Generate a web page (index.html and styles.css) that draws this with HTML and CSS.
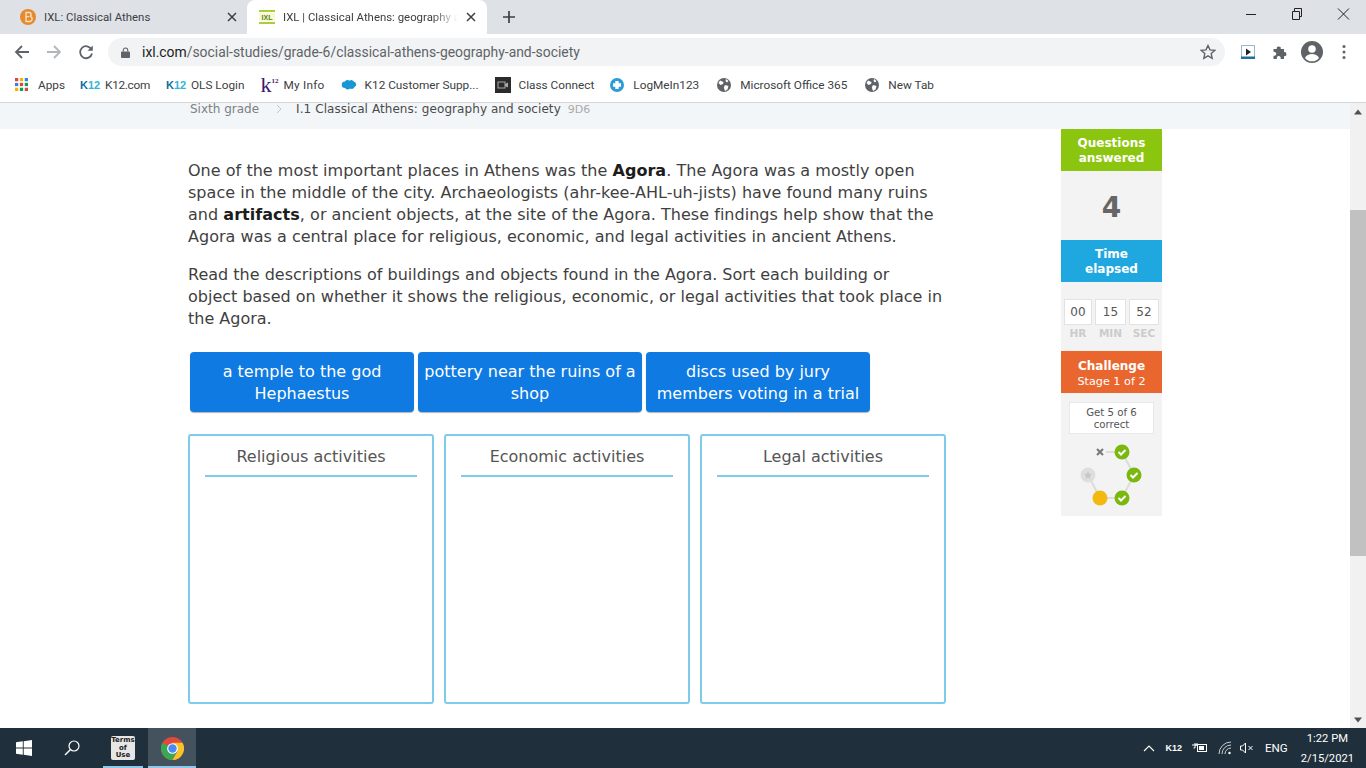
FILE: index.html
```html
<!DOCTYPE html>
<html lang="en">
<head>
<meta charset="utf-8">
<title>IXL | Classical Athens: geography and society</title>
<link rel="stylesheet" href="styles.css">
</head>
<body>
<div class="tabbar">
  <div class="tab">
    <svg class="favicon" viewBox="0 0 16 16"><circle cx="8" cy="8" r="8" fill="#e58a2e"/><path d="M6 3.5h3a2 2 0 0 1 .8 3.900A2.300 2.300 0 0 1 9.300 12.500H6z" fill="none" stroke="#fbe3c6" stroke-width="1.300"/><path d="M6 7.700h3" stroke="#fbe3c6" stroke-width="1.100"/></svg>
    <span class="tab-title">IXL: Classical Athens</span>
    <svg class="tab-close" viewBox="0 0 10 10"><path d="M1 1l8 8M9 1l-8 8" stroke="#3c4043" stroke-width="1.500"/></svg>
  </div>
  <div class="tab tab-active">
    <svg class="favicon" viewBox="0 0 16 16"><rect y="1" width="16" height="2" fill="#a8cf3a"/><rect y="13" width="16" height="2" fill="#a8cf3a"/><rect y="4" width="16" height="8" fill="#fff6cf"/><text x="8" y="11" text-anchor="middle" class="fav-text">IXL</text></svg>
    <span class="tab-title tab-fade">IXL | Classical Athens: geography and society</span>
    <svg class="tab-close" viewBox="0 0 10 10"><path d="M1 1l8 8M9 1l-8 8" stroke="#3c4043" stroke-width="1.500"/></svg>
  </div>
  <svg class="new-tab" viewBox="0 0 12 12"><path d="M6 0v12M0 6h12" stroke="#3c4043" stroke-width="1.700"/></svg>
  <div class="win-controls">
    <svg class="win-btn" viewBox="0 0 46 34"><path d="M18 14.500h10" stroke="#222" stroke-width="1"/></svg>
    <svg class="win-btn" viewBox="0 0 46 34"><path d="M18.500 11.500h7v8h-7zM20.500 11.500v-3h7v8h-2" fill="none" stroke="#222"/></svg>
    <svg class="win-btn" viewBox="0 0 46 34"><path d="M18 8.500l11 11M29 8.500l-11 11" stroke="#222" stroke-width="1"/></svg>
  </div>
</div>

<div class="toolbar">
  <svg class="nav-icon" viewBox="0 0 16 16"><path d="M15 8H2M8 2L2 8l6 6" fill="none" stroke="#5f6368" stroke-width="1.800"/></svg>
  <svg class="nav-icon" viewBox="0 0 16 16"><path d="M1 8h13M8 2l6 6-6 6" fill="none" stroke="#b4b7ba" stroke-width="1.800"/></svg>
  <svg class="nav-icon" viewBox="0 0 16 16"><path d="M13.500 5.500A6 6 0 1 0 14 9.500" fill="none" stroke="#5f6368" stroke-width="1.800"/><path d="M14.800 1.500v5.200H9.600z" fill="#5f6368"/></svg>
  <div class="omnibox">
    <svg class="lock" viewBox="0 0 10 12"><path d="M2.500 5V3.500a2.500 2.500 0 0 1 5 0V5" fill="none" stroke="#5f6368" stroke-width="1.200"/><rect y="5" width="10" height="7" rx="1" fill="#5f6368"/></svg>
    <span class="url"><span class="url-host">ixl.com</span>/social-studies/grade-6/classical-athens-geography-and-society</span>
    <svg class="star" viewBox="0 0 16 16"><path d="M8 1.500l2 4.400 4.700.5-3.500 3.200 1 4.700L8 11.900l-4.200 2.400 1-4.700L1.300 6.400 6 5.900z" fill="none" stroke="#5f6368" stroke-width="1.400"/></svg>
  </div>
  <div class="ext-icons">
    <svg class="ext-icon" viewBox="0 0 16 16"><rect x="1.500" y="1.500" width="13" height="13" fill="#fff" stroke="#9db7cc"/><rect x="1" y="12.500" width="14" height="2.500" fill="#1f6f9f"/><path d="M6 4.500l5 3.500-5 3.500z" fill="#222"/></svg>
    <svg class="ext-icon" viewBox="0 0 16 16"><path d="M1.500 5h3.300a2 2 0 1 1 3.900 0H12v3.200a2 2 0 1 1 0 3.900V15H8.500a2 2 0 1 0-3.500 0H1.500v-3.300a2 2 0 1 0 0-3.700z" fill="#5f6368"/></svg>
    <svg class="avatar" viewBox="0 0 22 22"><circle cx="11" cy="11" r="11" fill="#5f6368"/><circle cx="11" cy="8" r="3.800" fill="#fff"/><path d="M4 17c1.500-3 4-4 7-4s5.500 1 7 4a9 9 0 0 1-14 0z" fill="#fff"/></svg>
    <svg class="menu-dots" viewBox="0 0 4 16"><circle cx="2" cy="2.500" r="1.500" fill="#5f6368"/><circle cx="2" cy="8" r="1.500" fill="#5f6368"/><circle cx="2" cy="13.500" r="1.500" fill="#5f6368"/></svg>
  </div>
</div>

<div class="bookmarks">
  <span class="bm bm-apps">
    <svg class="bm-icon" viewBox="0 0 12 12"><rect width="3" height="3" fill="#d9483b"/><rect x="4.500" width="3" height="3" fill="#f4b400"/><rect x="9" width="3" height="3" fill="#3f7fe0"/><rect y="4.500" width="3" height="3" fill="#3f7fe0"/><rect x="4.500" y="4.500" width="3" height="3" fill="#d9483b"/><rect x="9" y="4.500" width="3" height="3" fill="#0f9d58"/><rect y="9" width="3" height="3" fill="#f4b400"/><rect x="4.500" y="9" width="3" height="3" fill="#0f9d58"/><rect x="9" y="9" width="3" height="3" fill="#d9483b"/></svg>
    Apps</span>
  <span class="bm bm-tight"><span class="k12-mark">K<i>12</i></span>K12.com</span>
  <span class="bm"><span class="k12-mark">K<i>12</i></span>OLS Login</span>
  <span class="bm bm-loose"><span class="k2-mark">k<sup>12</sup></span>My Info</span>
  <span class="bm">
    <svg class="bm-icon-wide" viewBox="0 0 16 12"><path d="M4 2.500a3 3 0 0 1 4.500-.8 3 3 0 0 1 4.500 1 2.800 2.800 0 0 1 .5 5.300 3 3 0 0 1-4.300 1.500 3.200 3.200 0 0 1-5.200-.5A3 3 0 0 1 4 2.500z" fill="#1798d5"/></svg>
    K12 Customer Supp...</span>
  <span class="bm">
    <svg class="bm-icon-cc" viewBox="0 0 16 16"><rect width="16" height="16" fill="#2b2b2b"/><rect x="3" y="5" width="7" height="6" fill="none" stroke="#aaa"/><path d="M10 7l3-1.500v5L10 9z" fill="#aaa"/></svg>
    Class Connect</span>
  <span class="bm">
    <svg class="bm-icon-lg" viewBox="0 0 14 14"><circle cx="7" cy="7" r="7" fill="#2c9bd6"/><path d="M5.300 3h3.400v2.300H11v3.400H8.700V11H5.300V8.700H3V5.300h2.300z" fill="#fff"/></svg>
    LogMeIn123</span>
  <span class="bm bm-globe">
    <svg class="bm-icon-lg" viewBox="0 0 14 14"><circle cx="7" cy="7" r="7" fill="#5f6368"/><path d="M3 2.500l3.500 1.500L6 6 3.500 7 1.500 5zM8 7l3.500 1-1 3.500L8 13 6.800 9.500zM9 1l2.500 2L10 4.500 8.500 3z" fill="#fff"/></svg>
    Microsoft Office 365</span>
  <span class="bm bm-globe">
    <svg class="bm-icon-lg" viewBox="0 0 14 14"><circle cx="7" cy="7" r="7" fill="#5f6368"/><path d="M3 2.500l3.500 1.500L6 6 3.500 7 1.500 5zM8 7l3.500 1-1 3.500L8 13 6.800 9.500zM9 1l2.500 2L10 4.500 8.500 3z" fill="#fff"/></svg>
    New Tab</span>
</div>

<div class="viewport">
  <main class="page">
    <nav class="crumbs">
      <span class="crumb-grade">Sixth grade</span>
      <svg class="crumb-sep" viewBox="0 0 6 10"><path d="M1 1l4 4-4 4" fill="none" stroke="#c4c8cb"/></svg>
      <span class="crumb-skill">I.1 Classical Athens: geography and society</span>
      <span class="crumb-code">9D6</span>
    </nav>
    <div class="columns">
      <section class="practice">
        <p class="para">One of the most important places in Athens was the <b>Agora</b>. The Agora was a mostly open space in the middle of the city. Archaeologists (ahr-kee-AHL-uh-jists) have found many ruins and <b>artifacts</b>, or ancient objects, at the site of the Agora. These findings help show that the Agora was a central place for religious, economic, and legal activities in ancient Athens.</p>
        <p class="para para-tight">Read the descriptions of buildings and objects found in the Agora. Sort each building or<br>object based on whether it shows the religious, economic, or legal activities that took place in<br>the Agora.</p>
        <div class="tiles">
          <div class="tile">a temple to the god Hephaestus</div>
          <div class="tile">pottery near the ruins of a shop</div>
          <div class="tile">discs used by jury members voting in a trial</div>
        </div>
        <div class="bins">
          <div class="bin"><h3 class="bin-title">Religious activities</h3></div>
          <div class="bin"><h3 class="bin-title">Economic activities</h3></div>
          <div class="bin"><h3 class="bin-title">Legal activities</h3></div>
        </div>
      </section>
      <aside class="stats">
        <div class="stat-head green">Questions answered</div>
        <div class="stat-num">4</div>
        <div class="stat-head blue">Time elapsed</div>
        <div class="timer">
          <div class="timer-col"><span class="timer-box tb-hr">00</span><span class="timer-label">HR</span></div>
          <div class="timer-col"><span class="timer-box tb-min">15</span><span class="timer-label">MIN</span></div>
          <div class="timer-col"><span class="timer-box tb-sec">52</span><span class="timer-label">SEC</span></div>
        </div>
        <div class="stat-head orange"><b>Challenge</b><br><span class="stage">Stage 1 of 2</span></div>
        <div class="goal">Get 5 of 6 correct</div>
        <svg class="progress" viewBox="0 0 101 74">
          <path d="M39 10H61L73 33 61 56H39L27 33" fill="none" stroke="#dcdcdc" stroke-width="2"/>
          <rect x="33" y="4" width="12" height="12" fill="#f3f3f3"/>
          <path d="M36 7l6 6M42 7l-6 6" stroke="#777" stroke-width="2"/>
          <g class="tick"><circle cx="61" cy="10" r="7.500" fill="#7ab80e"/><path d="M57.500 10l2.500 2.500 4.500-4.500" fill="none" stroke="#fff" stroke-width="2"/></g>
          <g class="tick"><circle cx="73" cy="33" r="7.500" fill="#7ab80e"/><path d="M69.500 33l2.500 2.500 4.500-4.500" fill="none" stroke="#fff" stroke-width="2"/></g>
          <g class="tick"><circle cx="61" cy="56" r="7.500" fill="#7ab80e"/><path d="M57.500 56l2.500 2.500 4.500-4.500" fill="none" stroke="#fff" stroke-width="2"/></g>
          <circle cx="39" cy="56" r="7.500" fill="#f2b90f"/>
          <circle cx="27" cy="33" r="7.500" fill="#dedede"/>
          <path d="M27 29l1.200 2.700 3 .3-2.200 2 .6 3-2.600-1.500-2.600 1.500.6-3-2.200-2 3-.3z" fill="#c8c8c8"/>
        </svg>
      </aside>
    </div>
  </main>
  <div class="scrollbar">
    <svg class="sb-arrow" viewBox="0 0 16 16"><path d="M4 11l4-5 4 5z" fill="#505050"/></svg>
    <div class="sb-track"><div class="sb-thumb"></div></div>
    <svg class="sb-arrow" viewBox="0 0 16 16"><path d="M4 6l4 5 4-5z" fill="#505050"/></svg>
  </div>
</div>

<footer class="taskbar">
  <div class="task-cell">
    <svg class="win-logo" viewBox="0 0 16 16"><path d="M0 2.300l6.800-1v6.200H0zM7.700 1.200L16 0v7.500H7.700zM0 8.400h6.800v6.300l-6.800-1zM7.700 8.400H16V16l-8.300-1.200z" fill="#fff"/></svg>
  </div>
  <div class="task-cell">
    <svg class="search" viewBox="0 0 16 16"><circle cx="10" cy="6" r="5" fill="none" stroke="#fff" stroke-width="1.200"/><path d="M6.500 9.500L1 15" stroke="#fff" stroke-width="1.400"/></svg>
  </div>
  <div class="task-cell task-open">
    <div class="terms">Terms<br>of<br>Use</div>
  </div>
  <div class="task-cell task-open task-active">
    <svg class="chrome" viewBox="0 0 24 24">
      <circle cx="12" cy="12" r="12" fill="#e2483b"/>
      <path d="M12 12L1.600 6A12 12 0 0 0 12 24l6-10.400z" fill="#3aa757"/>
      <path d="M12 6h10.400A12 12 0 0 1 12 24l5.200-9z" fill="#f6c329"/>
      <circle cx="12" cy="12" r="5.600" fill="#fff"/><circle cx="12" cy="12" r="4.400" fill="#4a8af4"/>
    </svg>
  </div>
  <div class="tray">
    <svg class="tray-chev" viewBox="0 0 12 7"><path d="M1 6l5-5 5 5" fill="none" stroke="#fff" stroke-width="1.100"/></svg>
    <span class="tray-k12">K12</span>
    <svg class="tray-batt" viewBox="0 0 16 12"><path d="M0 3h3V1M3 3h2V1M5 3H3v3H1.500" fill="none" stroke="#fff"/><rect x="5.500" y="2.500" width="9" height="7" fill="none" stroke="#fff"/><rect x="7" y="4" width="5" height="4" fill="#fff"/></svg>
    <svg class="tray-wifi" viewBox="0 0 14 14"><path d="M1 13A12 12 0 0 1 13 1M4 13a9 9 0 0 1 9-9M7 13a6 6 0 0 1 6-6" fill="none" stroke="#c9ced2" stroke-width="1"/><circle cx="11.500" cy="12" r="1.200" fill="#fff"/></svg>
    <svg class="tray-sound" viewBox="0 0 14 14"><path d="M1 5h2l3-3v10L3 9H1zM9 5l4 4M13 5l-4 4" fill="none" stroke="#fff"/></svg>
    <span class="tray-lang">ENG</span>
    <div class="clock"><span>1:22 PM</span><span>2/15/2021</span></div>
  </div>
</footer>
</body>
</html>
```
FILE: styles.css
```css
* { box-sizing: border-box; }
html, body { margin: 0; height: 100%; overflow: hidden; }
body {
  width: 1366px;
  height: 768px;
  display: flex;
  flex-direction: column;
  font-family: Roboto, "Open Sans", "Liberation Sans", sans-serif;
  background: #fff;
}

/* browser chrome */
.tabbar {
  height: 34px;
  flex: none;
  background: #dee1e6;
  display: flex;
  align-items: stretch;
  color: #3c4043;
}
.tab {
  width: 247px;
  display: flex;
  align-items: center;
  padding: 0 10px 0 20px;
}
.tab-active {
  width: 240px;
  background: #fff;
  border-radius: 8px 8px 0 0;
  padding: 0 11px 0 12px;
}
.favicon { width: 16px; height: 16px; flex: none; margin-right: 8px; }
.fav-text { font: bold 7px "Liberation Sans", sans-serif; fill: #4a8a1a; }
.tab-title { flex: 1; white-space: nowrap; overflow: hidden; font-size: 11.400px; }
.tab-fade {
  -webkit-mask-image: linear-gradient(90deg, #000 85%, transparent);
  mask-image: linear-gradient(90deg, #000 85%, transparent);
}
.tab-close { width: 10px; height: 10px; flex: none; margin-left: 8px; }
.new-tab { width: 12px; height: 12px; align-self: center; margin-left: 16px; }
.win-controls { margin-left: auto; display: flex; }
.win-btn { width: 46px; height: 34px; }

.toolbar {
  height: 36px;
  flex: none;
  display: flex;
  align-items: center;
  padding-left: 14px;
  gap: 16px;
}
.nav-icon { width: 16px; height: 16px; flex: none; }
.omnibox {
  width: 1117px;
  height: 28px;
  margin-left: -2px;
  border-radius: 14px;
  background: #f1f3f4;
  display: flex;
  align-items: center;
  padding: 0 9px 0 13px;
}
.lock { width: 9px; height: 11px; margin-right: 12px; flex: none; }
.url { font-size: 13.900px; color: #5f6368; flex: 1; white-space: nowrap; }
.url-host { color: #202124; }
.star { width: 16px; height: 16px; }
.ext-icons { display: flex; align-items: center; margin-left: -1px; }
.ext-icon { width: 16px; height: 16px; margin-right: 16px; }
.avatar { width: 22px; height: 22px; margin-left: -3px; margin-right: 19px; }
.menu-dots { width: 4px; height: 16px; }

.bookmarks {
  height: 33px;
  flex: none;
  display: flex;
  align-items: center;
  padding: 0 0 3px 15px;
  gap: 16px;
  border-bottom: 1px solid #d4d6d8;
  font-size: 11.800px;
  color: #3c4043;
}
.bm { display: flex; align-items: center; white-space: nowrap; }
.bm-apps { margin-right: -1px; }
.bm-tight { letter-spacing: -.3px; }
.bm-loose { letter-spacing: .25px; }
.bm-globe { margin-left: 2px; }
.bm-icon { width: 13px; height: 13px; margin-right: 10px; }
.bm-icon-wide { width: 16px; height: 12px; margin-right: 8px; }
.bm-icon-cc { width: 16px; height: 16px; margin-right: 8px; }
.bm-icon-lg { width: 14px; height: 14px; margin-right: 9px; }
.k12-mark { font: bold 11px "Liberation Sans", sans-serif; letter-spacing: 0; color: #0f6f9f; margin-right: 7px; width: 18px; }
.k12-mark i { font-style: normal; color: #33b5d6; }
.k2-mark { font: 22px/14px "Liberation Serif", serif; letter-spacing: 0; color: #3a1a6e; margin-right: 9px; width: 14px; }
.k2-mark sup { font-size: 7px; font-weight: bold; vertical-align: 9px; line-height: 0; }

/* page */
.viewport { flex: 1; display: flex; min-height: 0; }
.page {
  flex: 1;
  min-width: 0;
  overflow: hidden;
  font-family: "DejaVu Sans", Verdana, sans-serif;
}
.crumbs {
  height: 26px;
  background: #f3f6f8;
  display: flex;
  align-items: center;
  padding: 0 0 14px 190px;
  font-size: 12px;
  white-space: nowrap;
}
.crumb-grade { color: #7c8084; }
.crumb-sep { width: 6px; height: 10px; margin: 0 14px 0 17px; }
.crumb-skill { color: #4a4a4a; letter-spacing: .07px; }
.crumb-code { color: #aaa; margin-left: 7px; font-size: 11px; }

.columns { display: flex; }
.practice { width: 758px; margin-left: 188px; padding-top: 31px; }
.para {
  margin: 0 0 16px;
  font-size: 16px;
  line-height: 22px;
  letter-spacing: .03px;
  color: #3f3f3f;
}
.para-tight { letter-spacing: 0; white-space: nowrap; }
.para b { color: #1c1c1c; }
.tiles { display: flex; gap: 4px; margin: 22px 0 22px 2px; }
.tile {
  width: 224px;
  height: 60px;
  border-radius: 4px;
  background: #0e7ae2;
  box-shadow: 0 1px 1px rgba(0,0,0,.3);
  color: #fff;
  font-size: 16px;
  line-height: 22px;
  text-align: center;
  display: flex;
  align-items: center;
  justify-content: center;
  padding: 1px 4px 0;
}
.bins { display: flex; gap: 10px; }
.bin {
  width: 246px;
  height: 270px;
  border: 2px solid #7fcbea;
  border-radius: 3px;
  padding: 0 15px;
}
.bin-title {
  margin: 0;
  height: 41px;
  border-bottom: 2px solid #7fcbea;
  font-size: 16px;
  font-weight: normal;
  line-height: 41px;
  text-align: center;
  color: #555;
}

/* sidebar */
.stats {
  width: 101px;
  height: 387px;
  margin-left: 115px;
  background: #f3f3f3;
  display: flex;
  flex-direction: column;
  align-items: center;
}
.stat-head {
  width: 100%;
  height: 42px;
  flex: none;
  color: #fff;
  font-size: 12px;
  font-weight: bold;
  line-height: 15px;
  text-align: center;
  padding: 7px 10px 0;
}
.green { background: #8cc50f; }
.blue { background: #1fa8e0; }
.orange { background: #e9672f; padding: 8px 0 0; }
.stage { font-weight: normal; font-size: 11.200px; }
.stat-num {
  height: 69px;
  flex: none;
  font-size: 28px;
  font-weight: bold;
  line-height: 73px;
  color: #666;
}
.timer { height: 69px; flex: none; display: flex; gap: 3px; padding-top: 17px; }
.timer-col { display: flex; flex-direction: column; align-items: center; }
.timer-box {
  height: 26px;
  background: #fff;
  border: 1px solid #e2e2e2;
  font-size: 12px;
  line-height: 25px;
  text-align: center;
  color: #555;
}
.tb-hr { width: 28px; }
.tb-min { width: 31px; }
.tb-sec { width: 30px; }
.timer-label { margin-top: 1px; font-size: 10.500px; font-weight: bold; line-height: 14px; color: #ccc; }
.goal {
  width: 85px;
  height: 32px;
  flex: none;
  margin-top: 9px;
  background: #fff;
  border: 1px solid #e8e8e8;
  font-size: 10.200px;
  line-height: 12px;
  text-align: center;
  color: #555;
  padding: 4px 2px 0;
}
.progress { width: 101px; height: 74px; margin-top: 8px; flex: none; }

.scrollbar {
  width: 16px;
  flex: none;
  background: #f1f1f1;
  display: flex;
  flex-direction: column;
}
.sb-arrow { width: 16px; height: 17px; flex: none; }
.sb-track { flex: 1; padding-top: 90px; }
.sb-thumb { height: 346px; background: #c1c1c1; }

/* taskbar */
.taskbar {
  height: 40px;
  flex: none;
  background: #1f2f3b;
  display: flex;
  align-items: stretch;
  color: #fff;
}
.task-cell { width: 48px; display: flex; align-items: center; justify-content: center; position: relative; flex: none; }
.task-open { margin-left: 3px; }
.task-open::after {
  content: "";
  position: absolute;
  left: 4px;
  right: 4px;
  bottom: 0;
  height: 2px;
  background: #8fc7ea;
}
.task-active { margin-left: 1px; background: #44525e; }
.task-active::after { left: 0; right: 0; }
.win-logo { width: 16px; height: 16px; }
.search { width: 16px; height: 16px; }
.terms {
  width: 24px;
  height: 24px;
  background: #e6e6e6;
  border-radius: 2px;
  color: #222;
  font: bold 7px/7.500px "DejaVu Sans", sans-serif;
  text-align: center;
  padding-top: 1px;
}
.chrome { width: 23px; height: 23px; }
.tray {
  margin-left: auto;
  display: flex;
  align-items: center;
  padding-right: 12px;
  font-size: 11.600px;
}
.tray-chev { width: 12px; height: 7px; margin-right: 10px; }
.tray-k12 { font: bold 9px "Liberation Sans", sans-serif; margin-right: 10px; }
.tray-batt { width: 16px; height: 12px; margin-right: 10px; }
.tray-wifi { width: 14px; height: 14px; margin-right: 7px; }
.tray-sound { width: 15px; height: 14px; margin-right: 11px; }
.tray-lang { margin-right: 13px; }
.clock { display: flex; flex-direction: column; align-items: center; line-height: 20px; font-size: 11.200px; padding-top: 1px; }
```
